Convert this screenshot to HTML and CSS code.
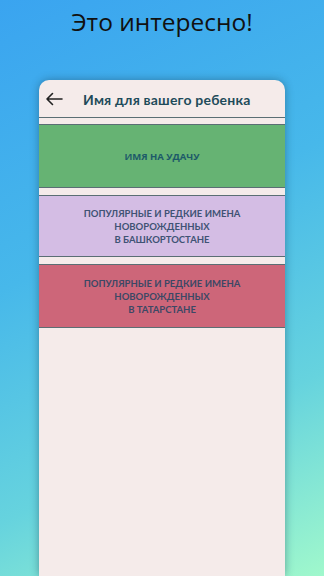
FILE: index.html
```html
<!DOCTYPE html>
<html lang="ru">
<head>
<meta charset="utf-8">
<link rel="stylesheet" href="styles.css">
</head>
<body>
<div class="page">
  <h1 class="promo">Это интересно!</h1>
  <div class="card">
    <div class="appbar">
      <svg class="back" width="18" height="14" viewBox="0 0 18 14">
        <path d="M17 7H2M7.5 1.5L2 7l5.5 5.5" fill="none" stroke="#222" stroke-width="1.6" stroke-linecap="round" stroke-linejoin="round"/>
      </svg>
      <span class="appbar-title">Имя для вашего ребенка</span>
    </div>
    <div class="list">
      <div class="item item-green"><span class="label-green">ИМЯ НА УДАЧУ</span></div>
      <div class="item item-lilac">ПОПУЛЯРНЫЕ И РЕДКИЕ ИМЕНА<br>НОВОРОЖДЕННЫХ<br>В БАШКОРТОСТАНЕ</div>
      <div class="item item-red">ПОПУЛЯРНЫЕ И РЕДКИЕ ИМЕНА<br>НОВОРОЖДЕННЫХ<br>В ТАТАРСТАНЕ</div>
    </div>
  </div>
</div>
</body>
</html>
```
FILE: styles.css
```css
html, body {
  margin: 0;
  padding: 0;
  height: 100%;
}
body {
  background: linear-gradient(155deg, #3aa4f0 0%, #47b8ea 40%, #66d3de 72%, #a0f8cc 100%);
  font-family: "Open Sans", sans-serif;
  overflow: hidden;
}
.page {
  height: 576px;
  display: flex;
  flex-direction: column;
}
.promo {
  margin: 0;
  height: 80px;
  box-sizing: border-box;
  padding-top: 5px;
  text-align: center;
  font-weight: 400;
  font-size: 24.5px;
  line-height: 34px;
  color: #111;
}
.card {
  flex: 1;
  margin: 0 39px;
  background: #f5ebea;
  border-radius: 10px 10px 0 0;
  box-shadow: 0 0 9px rgba(20, 60, 80, 0.45);
  display: flex;
  flex-direction: column;
}
.appbar {
  height: 37px;
  border-bottom: 1px solid #5b6e74;
  display: flex;
  align-items: center;
  padding-left: 6px;
}
.back {
  display: block;
  margin-right: 20px;
  margin-top: 1px;
}
.appbar-title {
  font-family: Lato, sans-serif;
  font-weight: 700;
  font-size: 14px;
  color: #1f4b5a;
  letter-spacing: 0.2px;
  margin-top: 1px;
}
.list {
  padding-top: 6px;
  display: flex;
  flex-direction: column;
  gap: 7px;
}
.item {
  height: 64px;
  box-sizing: border-box;
  border-top: 1px solid #5b6e74;
  border-bottom: 1px solid #5b6e74;
  display: flex;
  align-items: center;
  justify-content: center;
  text-align: center;
  font-family: Lato, sans-serif;
  font-weight: 700;
  font-size: 9.5px;
  line-height: 13px;
}
.item-green {
  background: #66b373;
}
.label-green {
  font-family: "Open Sans", sans-serif;
  font-weight: 700;
  font-size: 9.5px;
  color: #1d5a69;
  margin-top: 1px;
}
.item-lilac {
  height: 62px;
  background: #d4bde4;
  color: #3f5374;
}
.item-red {
  background: #cd6679;
  color: #3c4865;
}
```
